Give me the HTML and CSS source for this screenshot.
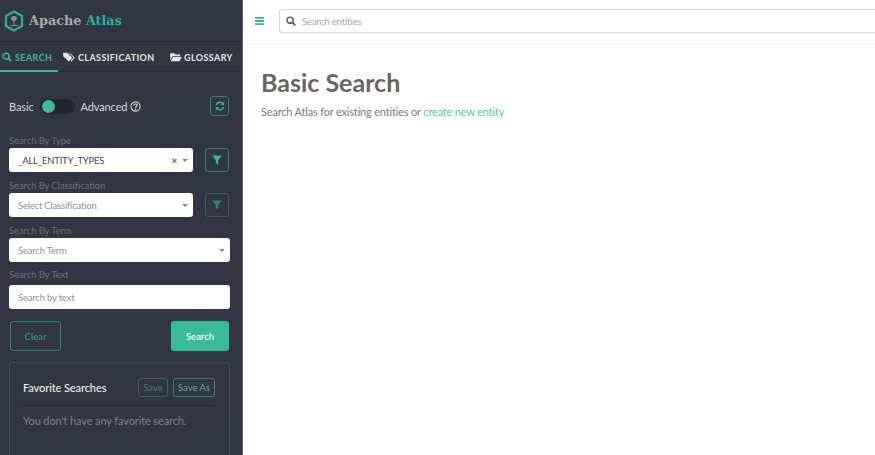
FILE: index.html
```html
<!DOCTYPE html>
<html lang="en">
<head>
<meta charset="utf-8">
<title>Apache Atlas</title>
<link rel="stylesheet" href="styles.css">
</head>
<body>
<div class="app">
  <aside class="sidebar">
    <div class="brand">
      <svg class="logo" viewBox="0 0 20 22" width="20" height="22"><path d="M10 1.500 18 6v10l-8 4.500L2 16V6z" fill="none" stroke="#1fb79b" stroke-width="2.200"/><path d="M7 8.500a3 2.500 0 0 1 6 0c0 2-2 2.500-3 2.500s-3-.5-3-2.500zM9.500 11h1v4h-1zM6.500 15h7v1h-7z" fill="#8a8c93"/></svg>
      <span class="brand-name">Apache <em>Atlas</em></span>
    </div>
    <nav class="tabs">
      <a class="tab tab-active"><svg viewBox="0 0 12 12" width="10" height="10"><circle cx="5" cy="5" r="3.600" fill="none" stroke="currentColor" stroke-width="1.800"/><path d="m7.700 7.700 3.300 3.300" stroke="currentColor" stroke-width="2"/></svg>SEARCH</a>
      <a class="tab"><svg viewBox="0 0 14 12" width="12" height="10"><path d="M0 1h5l6 6-4 4.500L0 5z" fill="currentColor"/><path d="M7 1h1l6 6-4 4.500-1-1 3.500-3.500z" fill="currentColor"/></svg>CLASSIFICATION</a>
      <a class="tab"><svg viewBox="0 0 14 12" width="12" height="10"><path d="M0 1.500h5l1 1.500h6v2H3L0 9.500zM3.500 6H14l-3 5H0.500z" fill="currentColor"/></svg>GLOSSARY</a>
    </nav>
    <div class="panel">
      <div class="mode-row">
        <span class="mode-label">Basic</span>
        <span class="toggle"><span class="knob"></span></span>
        <span class="mode-label">Advanced</span>
        <svg class="help" viewBox="0 0 12 12" width="11" height="11"><circle cx="6" cy="6" r="5" fill="none" stroke="currentColor" stroke-width="1.200"/><path d="M4.300 4.800C4.300 2.700 7.800 2.800 7.800 4.700 7.800 6 6 6 6 7.400" fill="none" stroke="currentColor" stroke-width="1.300"/><circle cx="6" cy="9" r=".8" fill="currentColor"/></svg>
        <button class="icon-btn refresh"><svg viewBox="0 0 12 12" width="10" height="10"><path d="M1.500 5A4.600 4.600 0 0 1 9.600 3.200M10.500 7A4.600 4.600 0 0 1 2.400 8.800" fill="none" stroke="#38bb9b" stroke-width="1.800"/><path d="M11 .8v4H7zM1 11.200v-4h4z" fill="#38bb9b"/></svg></button>
      </div>

      <label class="field-label">Search By Type</label>
      <div class="field-row">
        <div class="select select-short value"><span>_ALL_ENTITY_TYPES</span><i class="clear-x">×</i><i class="caret"></i></div>
        <button class="icon-btn"><svg viewBox="0 0 10 10" width="10" height="10"><path d="M0 .5h10L6.200 5v4.500L3.800 8V5z" fill="#38bb9b"/></svg></button>
      </div>
      <label class="field-label">Search By Classification</label>
      <div class="field-row">
        <div class="select select-short"><span>Select Classification</span><i class="caret"></i></div>
        <button class="icon-btn dim"><svg viewBox="0 0 10 10" width="10" height="10"><path d="M0 .5h10L6.200 5v4.500L3.800 8V5z" fill="#38bb9b"/></svg></button>
      </div>
      <label class="field-label">Search By Term</label>
      <div class="select"><span>Search Term</span><i class="caret"></i></div>
      <label class="field-label label-text">Search By Text</label>
      <div class="select text-input"><span>Search by text</span></div>

      <div class="actions">
        <button class="btn btn-outline">Clear</button>
        <button class="btn btn-solid">Search</button>
      </div>

      <section class="favorites">
        <div class="fav-head">
          <h2>Favorite Searches</h2>
          <button class="mini mini-save">Save</button>
          <button class="mini mini-saveas">Save As</button>
        </div>
        <p>You don't have any favorite search.</p>
      </section>
    </div>
  </aside>
  <main class="main">
    <header class="topbar">
      <svg class="menu" viewBox="0 0 9 8" width="9" height="8"><path d="M0 0h9v1.800H0zM0 3.100h9v1.800H0zM0 6.200h9V8H0z" fill="#38bb9b"/></svg>
      <div class="global-search">
        <svg viewBox="0 0 12 12" width="10" height="10"><circle cx="5" cy="5" r="3.700" fill="none" stroke="#555" stroke-width="1.700"/><path d="m7.700 7.700 3.500 3.500" stroke="#555" stroke-width="2"/></svg>
        <span>Search entities</span>
      </div>
    </header>
    <div class="content">
      <h1>Basic Search</h1>
      <p>Search Atlas for existing entities or <a>create new entity</a></p>
    </div>
  </main>
</div>
</body>
</html>
```
FILE: styles.css
```css
* { box-sizing: border-box; }
html, body { margin: 0; height: 100%; overflow: hidden; background: #fff; }
body { font-family: "Lato", "Noto Sans", sans-serif; }
.app { display: flex; height: 455px; }
.sidebar { width: 243px; flex: none; background: #323544; border-right: 1px solid #5f6172; color: #d8d9dc; display: flex; flex-direction: column; overflow: hidden; }
.brand { height: 42px; flex: none; display: flex; align-items: center; gap: 5px; padding-left: 4px; border-bottom: 1px solid #272934; }
.brand-name { font-family: "DejaVu Serif", serif; font-weight: 700; font-size: 12.800px; color: #a9aaaf; }
.brand-name em { font-style: normal; color: #1fb79b; }
.tabs { height: 30px; flex: none; display: flex; border-bottom: 1px solid #272934; }
.tab { display: flex; align-items: center; gap: 3px; font-size: 9px; font-weight: 700; letter-spacing: .4px; color: #e6e6e8; height: 30px; white-space: nowrap; padding-left: 5px; }
.tab:nth-child(2) { width: 107px; }
.tab:nth-child(3) { gap: 2px; }
.tab-active { width: 58px; padding: 2px 0 0 2px; color: #38bb9b; border-bottom: 2px solid #38bb9b; }
.panel { padding: 22px 12px 0 9px; display: flex; flex-direction: column; flex: none; }
.mode-row { display: flex; align-items: center; height: 24px; margin-bottom: 15px; font-size: 11px; letter-spacing: -.12px; color: #d8d9dc; }
.toggle { width: 35px; height: 15px; border-radius: 8px; background: #22242f; margin: 0 6px 0 6px; padding: 1px 2px; display: flex; }
.knob { width: 13px; height: 13px; border-radius: 50%; background: #38bb9b; }
.help { margin-left: 3px; color: #d8d9dc; }
.icon-btn { width: 24px; height: 24px; padding: 0; background: transparent; border: 1px solid #2a8a78; border-radius: 3px; display: flex; align-items: center; justify-content: center; flex: none; }
.icon-btn.dim { opacity: .55; }
.refresh { margin-left: auto; margin-right: 1px; height: 20px; width: 19px; }
.field-label { font-size: 9.500px; letter-spacing: -.1px; color: #6d7079; height: 15px; line-height: 15px; display: block; }
.label-text { margin-bottom: 3px; }
.field-row { display: flex; align-items: center; gap: 12px; margin-bottom: 6px; }
.select { height: 24px; width: 221px; flex: none; background: #fff; border-radius: 3px; display: flex; align-items: center; padding: 0 5px 0 9px; font-size: 9.500px; letter-spacing: -.2px; color: #8f9094; margin-bottom: 5px; }
.select-short { width: 184px; margin-bottom: 0; }
.select span { flex: 1; white-space: nowrap; }
.value { color: #444; }
.clear-x { font-style: normal; font-size: 10px; color: #555; margin-right: 5px; line-height: 1; font-weight: 700; }
.caret { width: 0; height: 0; border-left: 3px solid transparent; border-right: 3px solid transparent; border-top: 3px solid #888; }
.text-input { margin-bottom: 0; }
.actions { display: flex; justify-content: space-between; margin-top: 12px; padding: 0 1px; }
.btn { height: 30px; border-radius: 3px; font: 500 9.500px "Lato", sans-serif; }
.btn-outline { width: 51px; background: transparent; border: 1px solid #2a8a78; color: #2f9a84; }
.btn-solid { width: 58px; background: #38bb9b; border: 0; color: #fff; }
.favorites { margin-top: 11px; height: 100px; border: 1px solid #474a58; border-radius: 3px; padding: 15px 14px 15px 13px; }
.fav-head { display: flex; align-items: flex-start; gap: 5px; border-bottom: 1px solid #272934; height: 28px; }
.fav-head h2 { margin: 0 auto 0 0; font-size: 11px; line-height: 19px; letter-spacing: -.1px; font-weight: 500; color: #eee; white-space: nowrap; }
.mini { height: 19px; padding: 0; background: transparent; border: 1px solid #2a8a78; border-radius: 3px; color: #38bb9b; font: 9.500px "Lato", sans-serif; }
.mini-save { width: 30px; opacity: .6; }
.mini-saveas { width: 42px; }
.favorites p { margin: 8px 0 0; font-size: 11px; letter-spacing: -.12px; color: #7d808a; white-space: nowrap; }
.main { flex: 1; min-width: 0; }
.topbar { height: 44px; padding: 9px 0 10px 12px; display: flex; align-items: center; gap: 15px; border-bottom: 1px solid #f2f2f2; }
.global-search { flex: 1; height: 24px; border: 1px solid #d5d5d5; border-right: 0; border-radius: 3px 0 0 3px; display: flex; align-items: center; gap: 6px; padding-left: 6px; font-size: 9.500px; letter-spacing: -.1px; color: #a3a3a3; }
.content { padding: 23px 18px; }
.content h1 { margin: 0; font-size: 25px; font-weight: 700; color: #686662; line-height: 30px; }
.content p { margin: 8px 0 0; font-size: 11px; letter-spacing: -.18px; color: #777; }
.content a { color: #4cc7a8; }
```
